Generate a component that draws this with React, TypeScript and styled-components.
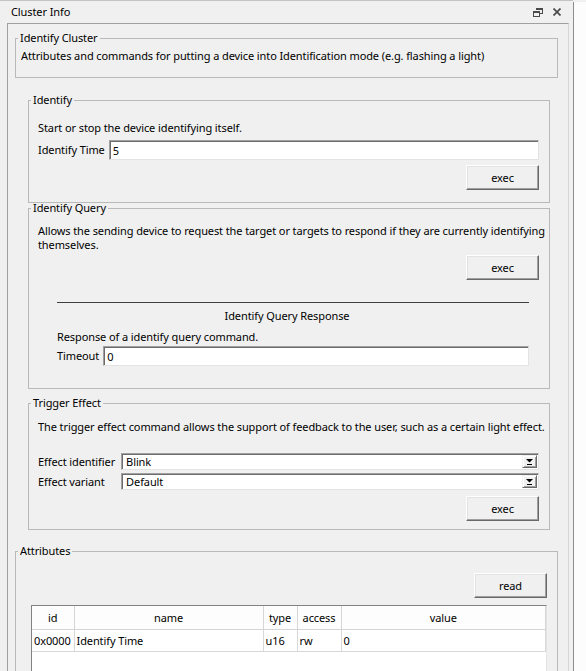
import React from "react";
import styled, { createGlobalStyle } from "styled-components";

const FONT = `"Noto Sans", "DejaVu Sans", sans-serif`;

const GlobalStyle = createGlobalStyle`
  html, body {
    margin: 0;
    padding: 0;
    background: #f0f0f0;
  }
  body {
    font-family: ${FONT};
    font-size: 11px;
    letter-spacing: -0.1px;
    color: #000;
  }
  * {
    box-sizing: border-box;
  }
`;

const Screen = styled.div`
  display: flex;
  width: 586px;
  height: 671px;
  overflow: hidden;
  background: #f0f0f0;
`;

const Dock = styled.div`
  flex: 0 0 573px;
  min-width: 0;
  display: flex;
  flex-direction: column;
  min-height: 0;
  padding: 0 4px 0 7px;
  border-top: 1px solid #c4c4c4;
`;

const TitleBar = styled.div`
  height: 22px;
  display: flex;
  align-items: center;
  padding: 0 8px 0 4px;
  line-height: 14px;
`;

const TitleText = styled.span`
  flex: 1;
`;

const TitleButtons = styled.div`
  display: flex;
  align-items: center;
  gap: 10px;
`;

const Panel = styled.div`
  flex: 1;
  min-height: 0;
  min-width: 0;
  display: flex;
  flex-direction: column;
  overflow: hidden;
  padding: 9px 10px 0 7px;
  border: 1px solid;
  border-bottom: none;
  border-color: #a0a0a0 #d6d6d6 transparent #a0a0a0;
`;

const GroupBox = styled.fieldset<{ $mt?: number; $grow?: boolean }>`
  margin: ${(p) => p.$mt ?? 0}px 0 0;
  padding: 0;
  min-width: 0;
  border: 1px solid #b9b9b9;
  ${(p) => (p.$grow ? "flex: 1; display: flex; flex-direction: column;" : "")}
`;

const Legend = styled.legend`
  margin-left: 2px;
  padding: 0 2px;
  line-height: 10px;
`;

const GroupBody = styled.div<{ $pad: string; $grow?: boolean }>`
  display: flex;
  flex-direction: column;
  min-width: 0;
  padding: ${(p) => p.$pad};
  ${(p) => (p.$grow ? "flex: 1; min-height: 0;" : "")}
`;

const Commands = styled.div`
  display: flex;
  flex-direction: column;
  min-width: 0;
  margin-top: 17px;
  padding: 0 8px 0 13px;
`;

const Text = styled.div<{ $mt?: number }>`
  margin-top: ${(p) => p.$mt ?? 0}px;
  line-height: 14px;
  white-space: nowrap;
`;

const SectionTitle = styled.div`
  margin-top: 6px;
  padding-right: 12px;
  line-height: 14px;
  text-align: center;
`;

const Row = styled.div<{ $mt?: number }>`
  display: flex;
  align-items: center;
  gap: 4px;
  margin-top: ${(p) => p.$mt ?? 0}px;
`;

const Label = styled.span`
  line-height: 14px;
  white-space: nowrap;
`;

const LineEdit = styled.input`
  flex: 1;
  min-width: 0;
  height: 20px;
  padding: 0 3px;
  border: 1px solid;
  border-color: #a0a0a0 #e3e3e3 #e3e3e3 #a0a0a0;
  box-shadow: inset 1px 1px 0 #6d6d6d;
  background: #fff;
  font: inherit;
  letter-spacing: inherit;
  line-height: 14px;
  color: #000;
  outline: none;
`;

const ButtonRow = styled.div<{ $mt?: number }>`
  display: flex;
  justify-content: flex-end;
  margin-top: ${(p) => p.$mt ?? 0}px;
`;

const PushButton = styled.button`
  width: 73px;
  height: 25px;
  padding: 0;
  font: inherit;
  letter-spacing: inherit;
  color: #000;
  background: #f0f0f0;
  border: 1px solid;
  border-color: #fff #696969 #696969 #fff;
  box-shadow: inset -1px -1px 0 #a0a0a0, inset 1px 1px 0 #e3e3e3;
`;

const ResponseSection = styled.div`
  display: flex;
  flex-direction: column;
  margin: 22px 10px 0 19px;
`;

const Rule = styled.div`
  height: 1px;
  background: #404040;
`;

const FormGrid = styled.div<{ $mt?: number }>`
  display: grid;
  grid-template-columns: auto 1fr;
  align-items: center;
  column-gap: 6px;
  row-gap: 3px;
  margin-top: ${(p) => p.$mt ?? 0}px;
`;

const Combo = styled.div`
  display: flex;
  height: 17px;
  padding: 0 1px 0 0;
  border: 1px solid;
  border-color: #a0a0a0 #e3e3e3 #e3e3e3 #a0a0a0;
  box-shadow: inset 1px 1px 0 #6d6d6d;
  background: #fff;
`;

const ComboText = styled.span`
  flex: 1;
  padding-left: 4px;
  line-height: 15px;
`;

const ArrowButton = styled.span`
  width: 15px;
  margin: 1px 0;
  display: flex;
  align-items: center;
  justify-content: center;
  background: #f0f0f0;
  border: 1px solid;
  border-color: #f0f0f0 #696969 #696969 #f0f0f0;
  box-shadow: inset 1px 1px 0 #fff, inset -1px -1px 0 #a0a0a0;
`;

const TableFrame = styled.div`
  flex: 1;
  min-height: 80px;
  margin-top: 7px;
  background: #fff;
  border: 1px solid;
  border-color: #828282 #e3e3e3 #e3e3e3 #828282;
`;

const Grid = styled.table`
  width: 100%;
  border-collapse: collapse;
  table-layout: fixed;
`;

const HeadCell = styled.th`
  height: 23px;
  padding: 0;
  font-weight: normal;
  text-align: center;
  background: #fdfdfd;
  border-right: 1px solid #d5d5d5;
  border-bottom: 1px solid #d5d5d5;
`;

const Cell = styled.td`
  height: 22px;
  padding: 0 2px;
  white-space: nowrap;
  overflow: hidden;
  border-right: 1px solid #d8d8d8;
  border-bottom: 1px solid #d8d8d8;
`;

const SidePane = styled.div`
  flex: 1;
  margin-top: 2px;
  background: #fcfcfc;
  border-left: 1px solid #8d8d8d;
`;

const FloatIcon = () => (
  <svg width="10" height="9" viewBox="0 0 10 9" fill="#4a4a4a">
    <rect x="3" y="0" width="7" height="2" />
    <rect x="9" y="2" width="1" height="4" />
    <rect x="7" y="5" width="3" height="1" />
    <rect x="0" y="3" width="7" height="2" />
    <rect x="0" y="5" width="1" height="4" />
    <rect x="6" y="5" width="1" height="4" />
    <rect x="0" y="8" width="7" height="1" />
  </svg>
);

const CloseIcon = () => (
  <svg width="8" height="8" viewBox="0 0 8 8">
    <path d="M0.5 0.5L7.5 7.5M7.5 0.5L0.5 7.5" stroke="#4a4a4a" strokeWidth="1.7" />
  </svg>
);

const ArrowIcon = () => (
  <svg width="7" height="6" viewBox="0 0 7 6" fill="#000">
    <path d="M0 0H7L3.5 3.5Z" />
    <rect x="1" y="5" width="5" height="1" />
  </svg>
);

const ComboBox = ({ value }: { value: string }) => (
  <Combo>
    <ComboText>{value}</ComboText>
    <ArrowButton>
      <ArrowIcon />
    </ArrowButton>
  </Combo>
);

const attributes = [{ id: "0x0000", name: "Identify Time", type: "u16", access: "rw", value: "0" }];

export default function App() {
  return (
    <>
      <GlobalStyle />
      <Screen>
        <Dock>
          <TitleBar>
            <TitleText>Cluster Info</TitleText>
            <TitleButtons>
              <FloatIcon />
              <CloseIcon />
            </TitleButtons>
          </TitleBar>
          <Panel>
            <GroupBox>
              <Legend>Identify Cluster</Legend>
              <GroupBody $pad="6px 6px 14px 5px">
                <Text>
                  Attributes and commands for putting a device into Identification mode (e.g. flashing a light)
                </Text>
              </GroupBody>
            </GroupBox>

            <Commands>
              <GroupBox>
                <Legend>Identify</Legend>
                <GroupBody $pad="16px 10px 12px 9px">
                  <Text>Start or stop the device identifying itself.</Text>
                  <Row $mt={5}>
                    <Label>Identify Time</Label>
                    <LineEdit readOnly value="5" />
                  </Row>
                  <ButtonRow $mt={5}>
                    <PushButton>exec</PushButton>
                  </ButtonRow>
                </GroupBody>
              </GroupBox>

              <GroupBox>
                <Legend>Identify Query</Legend>
                <GroupBody $pad="11px 10px 22px 9px">
                  <Text>
                    Allows the sending device to request the target or targets to respond if they are currently identifying
                    <br />
                    themselves.
                  </Text>
                  <ButtonRow $mt={3}>
                    <PushButton>exec</PushButton>
                  </ButtonRow>
                  <ResponseSection>
                    <Rule />
                    <SectionTitle>Identify Query Response</SectionTitle>
                    <Text $mt={7}>Response of a identify query command.</Text>
                    <Row $mt={2}>
                      <Label>Timeout</Label>
                      <LineEdit readOnly value="0" />
                    </Row>
                  </ResponseSection>
                </GroupBody>
              </GroupBox>

              <GroupBox $mt={9}>
                <Legend>Trigger Effect</Legend>
                <GroupBody $pad="12px 10px 8px 9px">
                  <Text>
                    The trigger effect command allows the support of feedback to the user, such as a certain light effect.
                  </Text>
                  <FormGrid $mt={19}>
                    <Label>Effect identifier</Label>
                    <ComboBox value="Blink" />
                    <Label>Effect variant</Label>
                    <ComboBox value="Default" />
                  </FormGrid>
                  <ButtonRow $mt={6}>
                    <PushButton>exec</PushButton>
                  </ButtonRow>
                </GroupBody>
              </GroupBox>
            </Commands>

            <GroupBox $mt={16} $grow>
              <Legend>Attributes</Legend>
              <GroupBody $pad="17px 10px 0 15px" $grow>
                <ButtonRow>
                  <PushButton>read</PushButton>
                </ButtonRow>
                <TableFrame>
                  <Grid>
                    <colgroup>
                      <col style={{ width: 42 }} />
                      <col style={{ width: 189 }} />
                      <col style={{ width: 34 }} />
                      <col style={{ width: 44 }} />
                      <col />
                    </colgroup>
                    <thead>
                      <tr>
                        <HeadCell>id</HeadCell>
                        <HeadCell>name</HeadCell>
                        <HeadCell>type</HeadCell>
                        <HeadCell>access</HeadCell>
                        <HeadCell>value</HeadCell>
                      </tr>
                    </thead>
                    <tbody>
                      {attributes.map((a) => (
                        <tr key={a.id}>
                          <Cell>{a.id}</Cell>
                          <Cell>{a.name}</Cell>
                          <Cell>{a.type}</Cell>
                          <Cell>{a.access}</Cell>
                          <Cell>{a.value}</Cell>
                        </tr>
                      ))}
                    </tbody>
                  </Grid>
                </TableFrame>
              </GroupBody>
            </GroupBox>
          </Panel>
        </Dock>
        <SidePane />
      </Screen>
    </>
  );
}
